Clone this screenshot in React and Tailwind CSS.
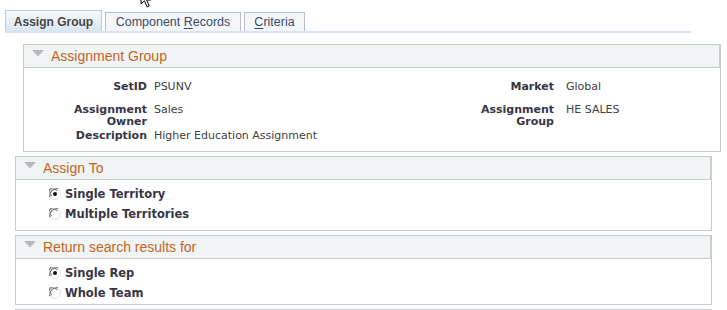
const labelCls = "font-bold text-[#363646]"
const valueCls = "text-[#404040]"

function Triangle() {
  return (
    <svg width="12" height="7" viewBox="0 0 12 7" className="shrink-0">
      <polygon points="0,0 12,0 6,6.5" fill="#b5b9bd" />
    </svg>
  )
}

function Radio({ checked }) {
  return (
    <svg width="12" height="12" viewBox="0 0 12 12" className="shrink-0">
      <circle cx="6" cy="6" r="5.5" fill="#fff" stroke="#e2e2e2" />
      <path d="M1.2 9 A5.2 5.2 0 0 1 9 1.2" fill="none" stroke="#7a7a7a" strokeWidth="1.2" />
      <path d="M2.6 8.2 A3.8 3.8 0 0 1 8.2 2.6" fill="none" stroke="#404040" strokeWidth="0.9" />
      {checked && <circle cx="6" cy="6" r="2" fill="#111" />}
    </svg>
  )
}

function Panel({ title, className, bodyClass, children }) {
  return (
    <div className={className}>
      <div className="h-[24px] flex items-start border border-r-2 border-[#c8cbd0] bg-[#f0f4f5]">
        <div className="pl-[8px] pt-[5px]">
          <Triangle />
        </div>
        <span className="pl-[7px] pt-[3px] text-[14px] leading-[16px] text-[#c4641c] font-['Liberation_Sans',Arial,sans-serif]">
          {title}
        </span>
      </div>
      <div className={`border border-t-0 border-[#c8cbd0] bg-white ${bodyClass}`}>{children}</div>
    </div>
  )
}

function RadioRow({ checked, label }) {
  return (
    <div className="h-[20px] flex items-center pl-[33px] gap-[4px]">
      <Radio checked={checked} />
      <span className={`${labelCls} text-[11.5px] leading-[14px]`}>{label}</span>
    </div>
  )
}

export default function App() {
  return (
    <div className="relative w-[727px] h-[310px] bg-white overflow-hidden font-['DejaVu_Sans',Verdana,sans-serif] text-[11px]">
      {/* mouse pointer, tip cut off above */}
      <svg className="absolute left-[140px] top-[-11px]" width="13" height="20" viewBox="0 0 13 20">
        <path d="M1 1 L1 15 L4.5 11.8 L7.2 18 L9.3 17 L6.7 11 L11 11 Z" fill="#fff" stroke="#000" strokeWidth="1" />
      </svg>

      {/* tabs */}
      <div className="pt-[10px] pl-[5px] font-['Liberation_Sans',Arial,sans-serif]">
        <div className="flex items-end gap-[3px]">
          <div className="h-[21px] w-[97px] flex items-center justify-center pt-[1px] border border-b-0 border-[#c3cad6] bg-gradient-to-b from-[#f8f9fb] to-[#d9e5f2] text-[12px] font-bold text-[#474747]">
            Assign Group
          </div>
          <div className="h-[19px] w-[136px] flex items-center justify-center pt-[1px] border border-b-0 border-[#b6bdc9] bg-[#f4f6f8] text-[12.5px] text-[#3b4c68]">
            <span>Component <u className="underline-offset-2">R</u>ecords</span>
          </div>
          <div className="h-[19px] w-[61px] flex items-center justify-center pt-[1px] border border-b-0 border-[#b6bdc9] bg-[#f4f6f8] text-[12.5px] text-[#3b4c68]">
            <span><u className="underline-offset-2">C</u>riteria</span>
          </div>
        </div>
        <div className="h-[2px] w-[686px] bg-[#dae4f0]" />
      </div>

      <Panel title="Assignment Group" className="ml-[23px] mt-[11px] w-[698px]" bodyClass="pt-[13px] pb-[9px] h-[84px]">
        <div className="grid grid-cols-[123px_307px_100px_1fr] leading-[12px]">
          <div className={`${labelCls} text-right`}>SetID</div>
          <div className={`${valueCls} pl-[7px]`}>PSUNV</div>
          <div className={`${labelCls} text-right`}>Market</div>
          <div className={`${valueCls} pl-[12px]`}>Global</div>

          <div className={`${labelCls} text-right mt-[11px]`}>Assignment<br />Owner</div>
          <div className={`${valueCls} pl-[7px] mt-[11px]`}>Sales</div>
          <div className={`${labelCls} text-right mt-[11px]`}>Assignment<br />Group</div>
          <div className={`${valueCls} pl-[12px] mt-[11px]`}>HE SALES</div>

          <div className={`${labelCls} text-right mt-[2px]`}>Description</div>
          <div className={`${valueCls} pl-[7px] mt-[2px] whitespace-nowrap`}>Higher Education Assignment</div>
          <div />
          <div />
        </div>
      </Panel>

      <Panel title="Assign To" className="ml-[15px] mt-[4px] w-[697px]" bodyClass="pt-[4px] h-[51px]">
        <RadioRow checked label="Single Territory" />
        <RadioRow label="Multiple Territories" />
      </Panel>

      <Panel title="Return search results for" className="ml-[15px] mt-[4px] w-[697px]" bodyClass="pt-[4px] h-[46px]">
        <RadioRow checked label="Single Rep" />
        <RadioRow label="Whole Team" />
      </Panel>

      <div className="ml-[15px] mt-[4px] w-[697px] h-[1px] bg-[#c8cbd0]" />
    </div>
  )
}
